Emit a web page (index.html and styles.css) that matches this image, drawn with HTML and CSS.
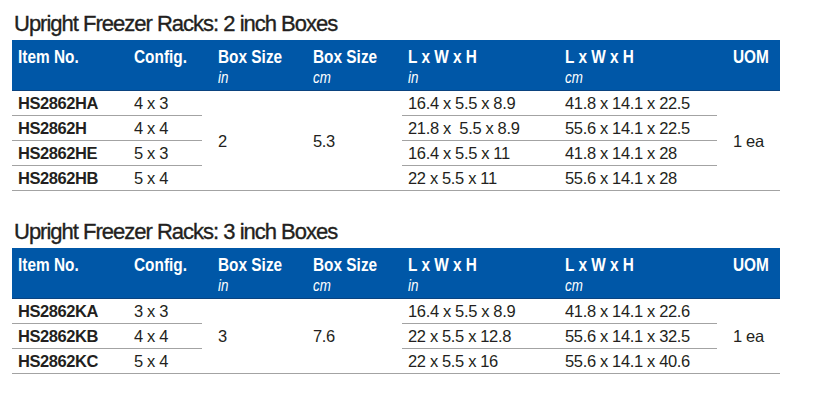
FILE: index.html
```html
<!DOCTYPE html>
<html>
<head>
<meta charset="utf-8">
<link rel="stylesheet" href="styles.css">
</head>
<body>
<section class="block">
  <h2 class="title">Upright Freezer Racks: 2 inch Boxes</h2>
  <table class="spec">
    <colgroup>
      <col class="c1"><col class="c2"><col class="c3"><col class="c4"><col class="c5"><col class="c6"><col class="c7">
    </colgroup>
    <thead>
      <tr>
        <th><span class="hd"><span class="hl">Item No.</span></span></th>
        <th><span class="hd"><span class="hl">Config.</span></span></th>
        <th><span class="hd"><span class="hl">Box Size</span><i class="unit">in</i></span></th>
        <th><span class="hd"><span class="hl">Box Size</span><i class="unit">cm</i></span></th>
        <th><span class="hd"><span class="hl">L x W x H</span><i class="unit">in</i></span></th>
        <th><span class="hd"><span class="hl">L x W x H</span><i class="unit">cm</i></span></th>
        <th><span class="hd"><span class="hl">UOM</span></span></th>
      </tr>
    </thead>
    <tbody>
      <tr>
        <td class="item">HS2862HA</td>
        <td class="short">4 x 3</td>
        <td class="merged" rowspan="4">2</td>
        <td class="merged" rowspan="4">5.3</td>
        <td>16.4 x 5.5 x 8.9</td>
        <td class="short">41.8 x 14.1 x 22.5</td>
        <td class="merged" rowspan="4">1 ea</td>
      </tr>
      <tr>
        <td class="item">HS2862H</td>
        <td class="short">4 x 4</td>
        <td>21.8 x &nbsp;5.5 x 8.9</td>
        <td class="short">55.6 x 14.1 x 22.5</td>
      </tr>
      <tr>
        <td class="item">HS2862HE</td>
        <td class="short">5 x 3</td>
        <td>16.4 x 5.5 x 11</td>
        <td class="short">41.8 x 14.1 x 28</td>
      </tr>
      <tr>
        <td class="item">HS2862HB</td>
        <td>5 x 4</td>
        <td>22 x 5.5 x 11</td>
        <td>55.6 x 14.1 x 28</td>
      </tr>
    </tbody>
  </table>
</section>

<section class="block second">
  <h2 class="title">Upright Freezer Racks: 3 inch Boxes</h2>
  <table class="spec">
    <colgroup>
      <col class="c1"><col class="c2"><col class="c3"><col class="c4"><col class="c5"><col class="c6"><col class="c7">
    </colgroup>
    <thead>
      <tr>
        <th><span class="hd"><span class="hl">Item No.</span></span></th>
        <th><span class="hd"><span class="hl">Config.</span></span></th>
        <th><span class="hd"><span class="hl">Box Size</span><i class="unit">in</i></span></th>
        <th><span class="hd"><span class="hl">Box Size</span><i class="unit">cm</i></span></th>
        <th><span class="hd"><span class="hl">L x W x H</span><i class="unit">in</i></span></th>
        <th><span class="hd"><span class="hl">L x W x H</span><i class="unit">cm</i></span></th>
        <th><span class="hd"><span class="hl">UOM</span></span></th>
      </tr>
    </thead>
    <tbody>
      <tr>
        <td class="item">HS2862KA</td>
        <td class="short">3 x 3</td>
        <td class="merged" rowspan="3">3</td>
        <td class="merged" rowspan="3">7.6</td>
        <td>16.4 x 5.5 x 8.9</td>
        <td class="short">41.8 x 14.1 x 22.6</td>
        <td class="merged" rowspan="3">1 ea</td>
      </tr>
      <tr>
        <td class="item">HS2862KB</td>
        <td class="short">4 x 4</td>
        <td>22 x 5.5 x 12.8</td>
        <td class="short">55.6 x 14.1 x 32.5</td>
      </tr>
      <tr>
        <td class="item">HS2862KC</td>
        <td>5 x 4</td>
        <td>22 x 5.5 x 16</td>
        <td>55.6 x 14.1 x 40.6</td>
      </tr>
    </tbody>
  </table>
</section>
</body>
</html>
```

FILE: styles.css
```css
html, body {
  margin: 0;
  padding: 0;
  background: #ffffff;
}

body {
  padding: 12px 0 0 12px;
  font-family: "Liberation Sans", Arial, sans-serif;
  color: #231f20;
}

.block {
  width: 768px;
}

.second {
  margin-top: 29px;
}

.title {
  margin: 0 0 4px 2px;
  font-size: 22px;
  line-height: 24px;
  font-weight: normal;
  letter-spacing: -1px;
  -webkit-text-stroke: 0.35px #231f20;
}

.spec {
  border-collapse: collapse;
  border-spacing: 0;
  table-layout: fixed;
  width: 768px;
}

.c1 { width: 116px; }
.c2 { width: 84px; }
.c3 { width: 95px; }
.c4 { width: 95px; }
.c5 { width: 157px; }
.c6 { width: 168px; }
.c7 { width: 53px; }

.spec th {
  background: #0057a7;
  color: #ffffff;
  text-align: left;
  vertical-align: top;
  padding: 8px 0 0 6px;
  height: 42px;
  border-bottom: 1px solid #0b437f;
  overflow: visible;
  white-space: nowrap;
}

.hd {
  display: inline-block;
  transform: scaleX(0.81);
  transform-origin: 0 0;
}

.hl {
  display: block;
  font-weight: bold;
  font-size: 19px;
  line-height: 18px;
}

.unit {
  display: block;
  font-weight: normal;
  font-size: 16.5px;
  line-height: 18px;
  margin-top: 2px;
}

.spec td {
  font-size: 16.5px;
  line-height: 18px;
  letter-spacing: -0.35px;
  height: 24px;
  padding: 0 0 0 6px;
  vertical-align: middle;
  white-space: nowrap;
  border-bottom: 1px solid #a3a3a3;
}

.spec td.item {
  font-weight: bold;
  letter-spacing: -0.45px;
}

.spec td.short {
  border-bottom: none;
  background: linear-gradient(#a3a3a3, #a3a3a3) no-repeat left bottom / calc(100% - 10px) 1px;
}
```
